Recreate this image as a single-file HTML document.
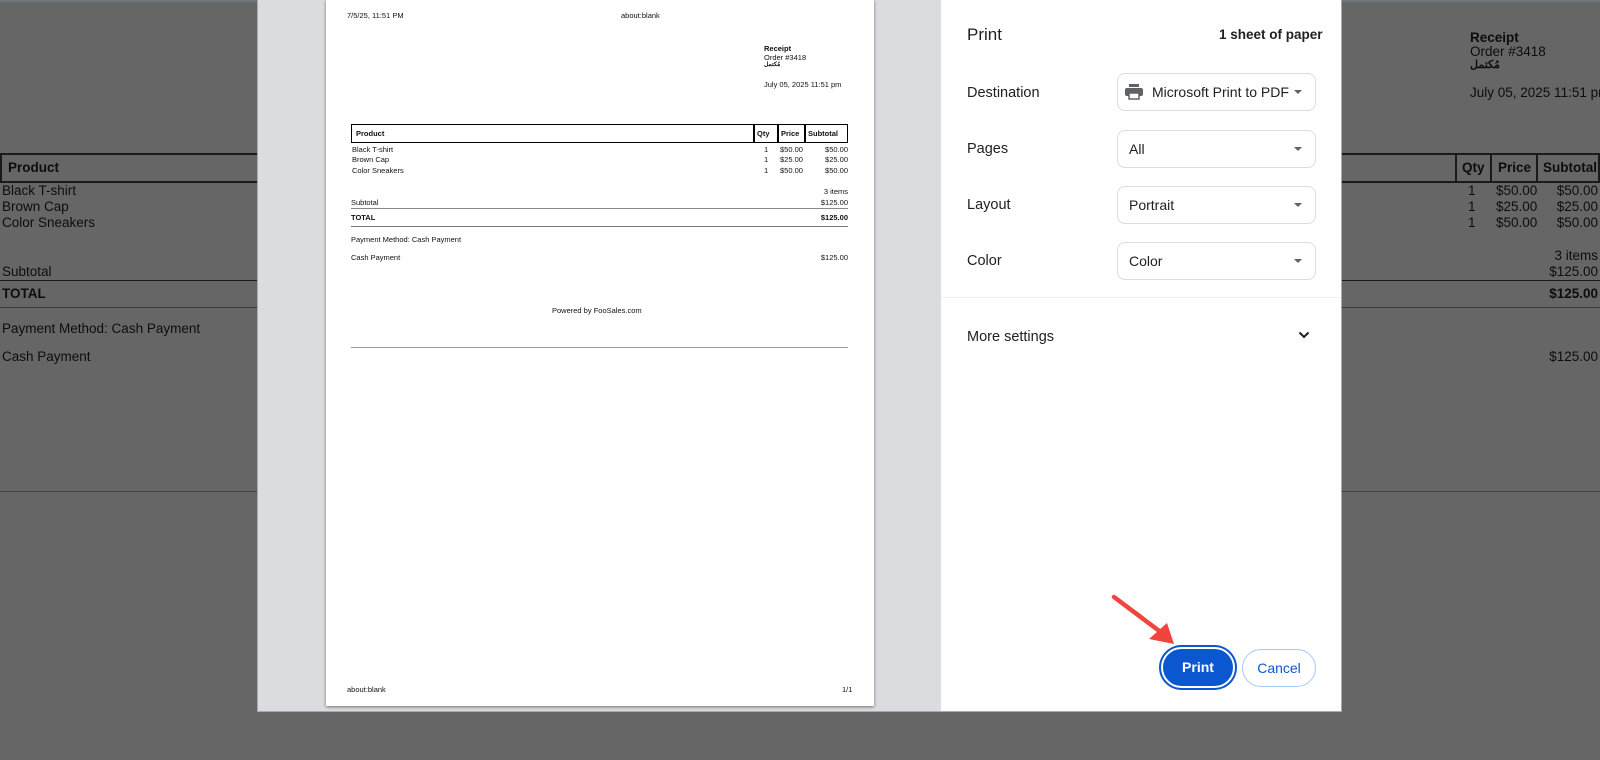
<!DOCTYPE html>
<html><head><meta charset="utf-8"><style>
*{margin:0;padding:0;box-sizing:border-box}
body{width:1600px;height:760px;background:#666;position:relative;overflow:hidden;font-family:"Liberation Sans","Noto Sans CJK SC",sans-serif;color:#0d0d0d}
.a{position:absolute;white-space:nowrap}
.bg{font-size:13.5px}
.p{font-size:7.5px;color:#111}
.r{text-align:right}
.lbl{color:#202124;font-family:"Liberation Sans",sans-serif;font-size:14.5px}
.sel{position:absolute;left:1117px;width:199px;height:38px;border:1px solid #dadce0;border-radius:8px;background:#fff;font-family:"Liberation Sans",sans-serif;font-size:14px;color:#202124;padding:10px 0 0 11px}
.sel:after{content:"";position:absolute;right:13px;top:16px;border:4px solid transparent;border-top:4px solid #5f6368}
</style></head><body>
<div class="a" style="left:0;top:0;width:1600px;height:2px;background:#6f767a"></div>
<div class="a bg" style="left:1470px;top:30px;font-weight:bold">Receipt</div>
<div class="a bg" style="left:1470px;top:44px">Order #3418</div>
<div class="a bg" style="left:1470px;top:58px;font-size:11px;font-weight:bold">مُكتمل</div>
<div class="a bg" style="left:1470px;top:85px">July 05, 2025 11:51 pm</div>
<div class="a" style="left:0;top:153px;width:1600px;height:30px;border:2px solid #1a1a1a"></div>
<div class="a" style="left:1455px;top:153px;width:2px;height:30px;background:#1a1a1a"></div>
<div class="a" style="left:1490px;top:153px;width:2px;height:30px;background:#1a1a1a"></div>
<div class="a" style="left:1536px;top:153px;width:2px;height:30px;background:#1a1a1a"></div>
<div class="a bg" style="left:8px;top:160px;font-weight:bold">Product</div>
<div class="a bg" style="left:1462px;top:160px;font-weight:bold">Qty</div>
<div class="a bg" style="left:1498px;top:160px;font-weight:bold">Price</div>
<div class="a bg" style="left:1543px;top:160px;font-weight:bold">Subtotal</div>
<div class="a bg" style="left:2px;top:183px;line-height:16px">Black T-shirt<br>Brown Cap<br>Color Sneakers</div>
<div class="a bg" style="left:1468px;top:183px;line-height:16px">1<br>1<br>1</div>
<div class="a bg" style="left:1496px;top:183px;line-height:16px">$50.00<br>$25.00<br>$50.00</div>
<div class="a bg r" style="right:2px;top:183px;line-height:16px">$50.00<br>$25.00<br>$50.00</div>
<div class="a bg r" style="right:2px;top:248px">3 items</div>
<div class="a bg" style="left:2px;top:264px">Subtotal</div>
<div class="a bg r" style="right:2px;top:264px">$125.00</div>
<div class="a" style="left:0;top:280px;width:1600px;height:1px;background:#1a1a1a"></div>
<div class="a bg" style="left:2px;top:286px;font-weight:bold">TOTAL</div>
<div class="a bg r" style="right:2px;top:286px;font-weight:bold">$125.00</div>
<div class="a" style="left:0;top:307px;width:1600px;height:1px;background:#3a3a3a"></div>
<div class="a bg" style="left:2px;top:321px">Payment Method: Cash Payment</div>
<div class="a bg" style="left:2px;top:349px">Cash Payment</div>
<div class="a bg r" style="right:2px;top:349px">$125.00</div>
<div class="a" style="left:0;top:491px;width:1600px;height:1px;background:#444"></div>
<div class="a" style="left:257px;top:0;width:1085px;height:712px;background:#dadce0;border:1px solid #aaa;border-top:0"></div>
<div class="a" style="left:326px;top:0;width:548px;height:706px;background:#fff;box-shadow:0 1px 3px rgba(0,0,0,.5)"></div>
<div class="a p" style="left:347px;top:11px">7/5/25, 11:51 PM</div>
<div class="a p" style="left:621px;top:11px">about:blank</div>
<div class="a p" style="left:764px;top:44px;font-weight:bold">Receipt</div>
<div class="a p" style="left:764px;top:53px">Order #3418</div>
<div class="a p" style="left:764px;top:61px;font-size:6px;font-weight:bold">مُكتمل</div>
<div class="a p" style="left:764px;top:80px">July 05, 2025 11:51 pm</div>
<div class="a" style="left:351px;top:124px;width:497px;height:19px;border:1.5px solid #000"></div>
<div class="a" style="left:753px;top:124px;width:1.5px;height:19px;background:#000"></div>
<div class="a" style="left:777px;top:124px;width:1.5px;height:19px;background:#000"></div>
<div class="a" style="left:804px;top:124px;width:1.5px;height:19px;background:#000"></div>
<div class="a p" style="left:356px;top:129px;font-weight:bold">Product</div>
<div class="a p" style="left:757px;top:129px;font-weight:bold">Qty</div>
<div class="a p" style="left:781px;top:129px;font-weight:bold">Price</div>
<div class="a p" style="left:808px;top:129px;font-weight:bold">Subtotal</div>
<div class="a p" style="left:352px;top:145px;line-height:10.4px">Black T-shirt<br>Brown Cap<br>Color Sneakers</div>
<div class="a p" style="left:764px;top:145px;line-height:10.4px">1<br>1<br>1</div>
<div class="a p" style="left:780px;top:145px;line-height:10.4px">$50.00<br>$25.00<br>$50.00</div>
<div class="a p r" style="right:752px;top:145px;line-height:10.4px">$50.00<br>$25.00<br>$50.00</div>
<div class="a p r" style="right:752px;top:187px">3 items</div>
<div class="a p" style="left:351px;top:198px">Subtotal</div>
<div class="a p r" style="right:752px;top:198px">$125.00</div>
<div class="a" style="left:351px;top:208px;width:497px;height:1px;background:#888"></div>
<div class="a p" style="left:351px;top:213px;font-weight:bold">TOTAL</div>
<div class="a p r" style="right:752px;top:213px;font-weight:bold">$125.00</div>
<div class="a" style="left:351px;top:226px;width:497px;height:1px;background:#777"></div>
<div class="a p" style="left:351px;top:235px">Payment Method: Cash Payment</div>
<div class="a p" style="left:351px;top:253px">Cash Payment</div>
<div class="a p r" style="right:752px;top:253px">$125.00</div>
<div class="a p" style="left:552px;top:306px">Powered by FooSales.com</div>
<div class="a" style="left:351px;top:347px;width:497px;height:1px;background:#999"></div>
<div class="a p" style="left:347px;top:685px">about:blank</div>
<div class="a p" style="left:842px;top:685px">1/1</div>
<div class="a" style="left:941px;top:0;width:400px;height:711px;background:#fff"></div>
<div class="a" style="left:967px;top:25px;font-family:'Liberation Sans',sans-serif;font-size:17px;color:#202124">Print</div>
<div class="a" style="left:1219px;top:27px;font-family:'Liberation Sans',sans-serif;font-size:13.5px;font-weight:bold;color:#202124">1 sheet of paper</div>
<div class="a lbl" style="left:967px;top:85px">Destination</div>
<div class="a lbl" style="left:967px;top:141px">Pages</div>
<div class="a lbl" style="left:967px;top:197px">Layout</div>
<div class="a lbl" style="left:967px;top:253px">Color</div>
<div class="sel" style="top:73px;padding-left:34px"><svg style="position:absolute;left:7px;top:10px" width="18" height="16" viewBox="0 0 18 16"><rect x="4" y="0" width="10" height="3" fill="#5f6368"/><rect x="0" y="4" width="18" height="8" rx="2" fill="#5f6368"/><rect x="4" y="9" width="10" height="6" fill="#fff" stroke="#5f6368" stroke-width="1.5"/></svg>Microsoft Print to PDF</div>
<div class="sel" style="top:130px">All</div>
<div class="sel" style="top:186px">Portrait</div>
<div class="sel" style="top:242px">Color</div>
<div class="a" style="left:941px;top:297px;width:400px;height:1px;background:#eee"></div>
<div class="a lbl" style="left:967px;top:329px">More settings</div>
<svg class="a" style="left:1298px;top:331px" width="12" height="8" viewBox="0 0 12 8"><path d="M1.5 1.5L6 6l4.5-4.5" fill="none" stroke="#202124" stroke-width="2"/></svg>
<div class="a" style="left:1161px;top:647px;width:74px;height:41px;border-radius:21px;background:#0b57d0;border:2px solid #fff;box-shadow:0 0 0 2px #0b57d0;color:#fff;font-family:'Liberation Sans',sans-serif;font-size:14px;font-weight:bold;text-align:center;line-height:37px">Print</div>
<div class="a" style="left:1242px;top:649px;width:74px;height:38px;border-radius:19px;border:1px solid #a8c7fa;color:#0b57d0;font-family:'Liberation Sans',sans-serif;font-size:14px;text-align:center;line-height:36px">Cancel</div>
<svg class="a" style="left:1100px;top:585px" width="90" height="70" viewBox="0 0 90 70"><path d="M14 12L62 48" stroke="#f0453d" stroke-width="4.5" stroke-linecap="round"/><path d="M74 59L49 54L67 38Z" fill="#f0453d"/></svg>
</body></html>
